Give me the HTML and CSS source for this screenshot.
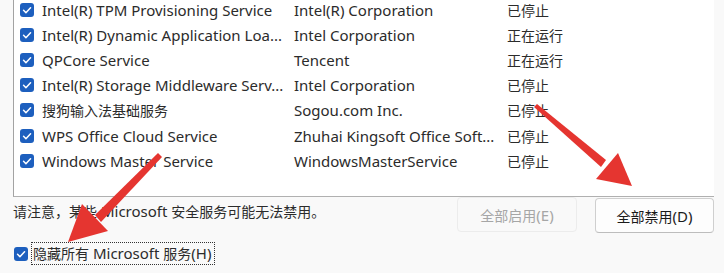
FILE: index.html
```html
<!DOCTYPE html>
<html lang="zh-CN">
<head>
<meta charset="utf-8">
<title>服务</title>
<link rel="stylesheet" href="styles.css">
</head>
<body>
<div class="list">
  <div class="row"><span class="cb"><svg viewBox="0 0 13 13"><path d="M3.3 6.8 L5.5 9 L9.8 4.4"/></svg></span><span class="c1">Intel(R) TPM Provisioning Service</span><span class="c2">Intel(R) Corporation</span><span class="c3 zh">已停止</span></div>
  <div class="row"><span class="cb"><svg viewBox="0 0 13 13"><path d="M3.3 6.8 L5.5 9 L9.8 4.4"/></svg></span><span class="c1">Intel(R) Dynamic Application Loa...</span><span class="c2">Intel Corporation</span><span class="c3 zh">正在运行</span></div>
  <div class="row"><span class="cb"><svg viewBox="0 0 13 13"><path d="M3.3 6.8 L5.5 9 L9.8 4.4"/></svg></span><span class="c1">QPCore Service</span><span class="c2">Tencent</span><span class="c3 zh">正在运行</span></div>
  <div class="row"><span class="cb"><svg viewBox="0 0 13 13"><path d="M3.3 6.8 L5.5 9 L9.8 4.4"/></svg></span><span class="c1">Intel(R) Storage Middleware Serv...</span><span class="c2">Intel Corporation</span><span class="c3 zh">已停止</span></div>
  <div class="row"><span class="cb"><svg viewBox="0 0 13 13"><path d="M3.3 6.8 L5.5 9 L9.8 4.4"/></svg></span><span class="c1 zh">搜狗输入法基础服务</span><span class="c2">Sogou.com Inc.</span><span class="c3 zh">已停止</span></div>
  <div class="row"><span class="cb"><svg viewBox="0 0 13 13"><path d="M3.3 6.8 L5.5 9 L9.8 4.4"/></svg></span><span class="c1">WPS Office Cloud Service</span><span class="c2">Zhuhai Kingsoft Office Soft...</span><span class="c3 zh">已停止</span></div>
  <div class="row"><span class="cb"><svg viewBox="0 0 13 13"><path d="M3.3 6.8 L5.5 9 L9.8 4.4"/></svg></span><span class="c1">Windows Master Service</span><span class="c2">WindowsMasterService</span><span class="c3 zh">已停止</span></div>
</div>
<div class="footer">
  <div class="note"><span class="zh">请注意，某些</span> Microsoft <span class="zh">安全服务可能无法禁用。</span></div>
  <div class="buttons">
    <button class="btn disabled"><span class="zh">全部启用</span>(E)</button>
    <button class="btn primary"><span class="zh">全部禁用</span>(D)</button>
  </div>
</div>
<div class="hide-row">
  <span class="cb"><svg viewBox="0 0 13 13"><path d="M3.3 6.8 L5.5 9 L9.8 4.4"/></svg></span>
  <span class="hide-label"><span class="zh">隐藏所有</span> Microsoft <span class="zh">服务</span>(H)</span>
</div>
<svg class="arrows" width="724" height="273" viewBox="0 0 724 273">
  <polygon points="534,107 537,104 606,160 601,167" />
  <polygon points="632,186 596,179 618,153" />
  <polygon points="158,153 162,157 101,222 95,215" />
  <polygon points="68,242 82,204 108,231" />
</svg>
</body>
</html>
```
FILE: styles.css
```css
* { box-sizing: border-box; }
html, body { margin: 0; padding: 0; }
body {
  width: 724px;
  height: 273px;
  overflow: hidden;
  background: #f9f9f9;
  font-family: "Noto Sans", "Noto Sans CJK SC", sans-serif;
  font-size: 15px;
  color: #2b2b2b;
  position: relative;
}
.zh { font-size: 14px; }
.list {
  margin-left: 13px;
  margin-top: -3px;
  width: 701px;
  height: 200px;
  background: #fff;
  border-left: 1px solid #a3a3a3;
  border-bottom: 1px solid #b0b0b0;
}
.row {
  display: flex;
  align-items: center;
  height: 25.2px;
  white-space: nowrap;
}
.cb {
  width: 14px;
  height: 14px;
  border-radius: 3px;
  background: #1d5fbe;
  display: inline-flex;
  flex: none;
}
.cb svg { width: 14px; height: 14px; }
.cb path { fill: none; stroke: #fff; stroke-width: 1.4; stroke-linecap: round; stroke-linejoin: round; }
.row .cb { margin-left: 6px; margin-right: 8px; }
.c1 { width: 252px; }
.c2 { width: 213px; }
.footer {
  display: flex;
  padding-left: 13px;
  padding-right: 10px;
}
.note {
  margin-top: 4px;
  line-height: 20px;
}
.buttons {
  margin-left: auto;
  display: flex;
  gap: 18px;
}
.btn {
  font-family: "Noto Sans", "Noto Sans CJK SC", sans-serif;
  font-size: 15px;
  height: 35px;
  border-radius: 4px;
  padding: 0;
}
.disabled {
  width: 120px;
  background: #f9f9f9;
  border: 1px solid #ececec;
  color: #a6a6a6;
}
.primary {
  width: 119px;
  margin-top: 1px;
  background: #fdfdfd;
  border: 1px solid #cfcfcf;
  border-bottom-color: #bdbdbd;
  color: #1b1b1b;
}
.hide-row {
  display: flex;
  align-items: center;
  margin-top: 9px;
  padding-left: 14px;
}
.hide-row .cb { margin-right: 3px; }
.hide-label {
  border: 1px dotted #333;
  height: 23px;
  line-height: 21px;
  padding: 0 3px 0 1px;
}
.arrows {
  position: absolute;
  left: 0;
  top: 0;
  pointer-events: none;
}
.arrows polygon { fill: #e53530; }
```
